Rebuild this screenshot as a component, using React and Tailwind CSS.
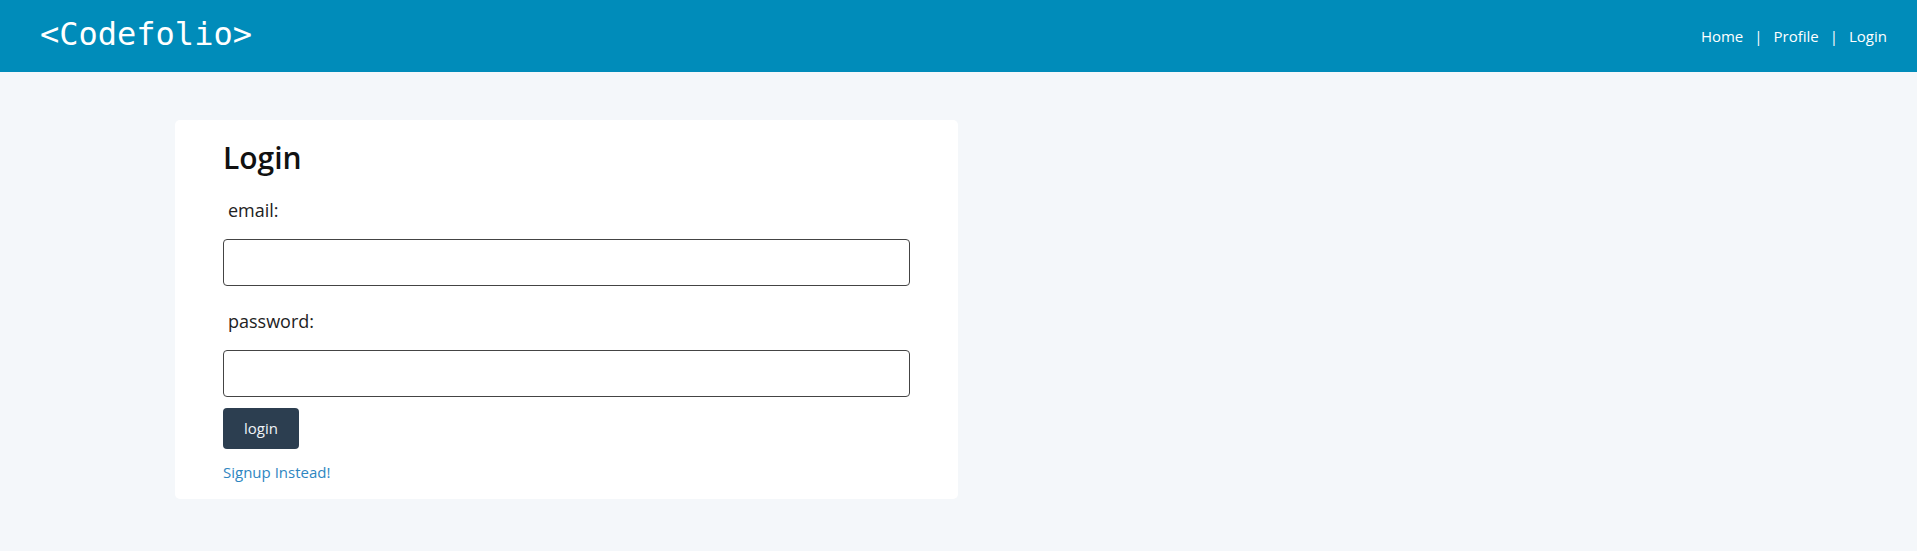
import { useState } from "react";

export default function App() {
  const [email, setEmail] = useState('');
  const [password, setPassword] = useState('');

  return (
    <div className="min-h-screen bg-[#f4f7fa] font-['Open_Sans',sans-serif] text-[#222]">
      {/* Header */}
      <header className="h-[72px] bg-[#008cba] flex items-start justify-between pl-[40px] pr-[30px]">
        <div className="mt-[16px] text-[32px] leading-[37px] text-white font-['DejaVu_Sans_Mono',monospace]">
          {'<Codefolio>'}
        </div>
        <nav className="h-full flex items-center gap-[11px] text-[15px] leading-[20px] text-white">
          <a href="#">Home</a>
          <span>|</span>
          <a href="#">Profile</a>
          <span>|</span>
          <a href="#">Login</a>
        </nav>
      </header>

      {/* Login card */}
      <div className="pt-[48px] pl-[175px]">
        <form
          className="w-[783px] bg-white rounded-[5px] px-[48px] pt-[17px] pb-[17px]"
          onSubmit={(e) => e.preventDefault()}
        >
          <h1 className="text-[30px] leading-[41px] font-semibold text-[#111]">Login</h1>

          <label className="block mt-[20px] pl-[5px] text-[18px] leading-[25px]">email:</label>
          <input
            type="email"
            value={email}
            onChange={(e) => setEmail(e.target.value)}
            className="block mt-[16px] w-full h-[47px] border border-[#444] rounded-[4px] px-3 outline-none"
          />

          <label className="block mt-[23px] pl-[5px] text-[18px] leading-[25px]">password:</label>
          <input
            type="password"
            value={password}
            onChange={(e) => setPassword(e.target.value)}
            className="block mt-[16px] w-full h-[47px] border border-[#444] rounded-[4px] px-3 outline-none"
          />

          <button
            type="submit"
            className="block mt-[11px] w-[76px] h-[41px] bg-[#2c3e50] text-[#f0f4f8] text-[15px] rounded-[4px]"
          >
            login
          </button>

          <a href="#" className="block mt-[13px] text-[15px] leading-[20px] text-[#2e86c1]">
            Signup Instead!
          </a>
        </form>
      </div>
    </div>
  );
}
